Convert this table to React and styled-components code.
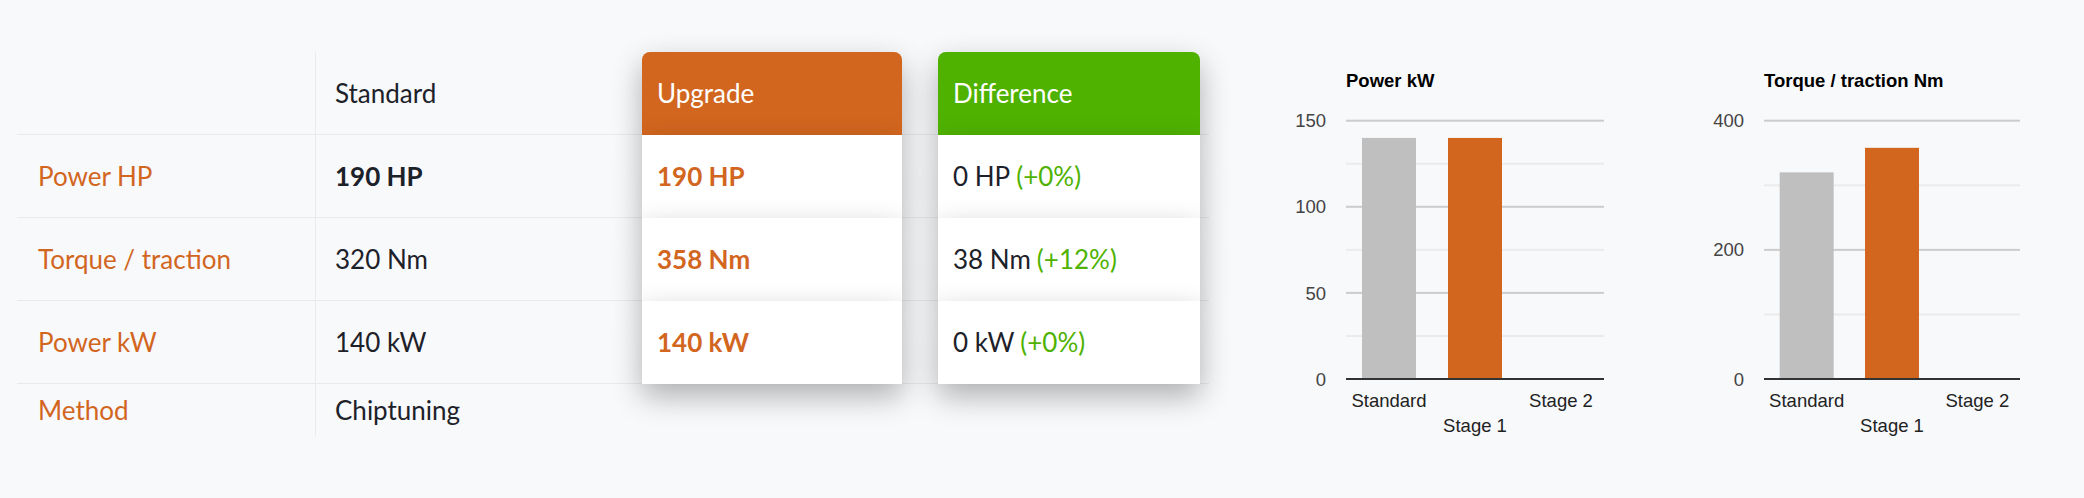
import React from "react";
import styled, { createGlobalStyle } from "styled-components";

const ORANGE = "#D2661F";
const GREEN = "#4FB200";
const LINE = "#E8EAED";
const DARK = "#1D2129";

const GlobalStyle = createGlobalStyle`
  html, body { margin: 0; padding: 0; background: #F8F9FB; }
  body { font-family: Lato, "Open Sans", sans-serif; }
`;

const Page = styled.div`
  display: flex;
  align-items: flex-start;
  padding: 40px 0 0 17px;
  height: 458px;
  overflow: hidden;
`;

const Table = styled.div`
  margin-top: 12px;
  width: 1192px;
  display: flex;
  flex-direction: column;
  font-family: Lato, "Open Sans", sans-serif;
  font-size: 26px;
  color: ${DARK};
`;

const Row = styled.div`
  display: flex;
  align-items: stretch;
  box-sizing: border-box;
  height: ${(p) => (p.$last ? "52px" : "83px")};
  border-bottom: ${(p) => (p.$last ? "none" : `1px solid ${LINE}`)};
`;

const LabelCell = styled.div`
  width: 298px;
  box-sizing: border-box;
  padding-left: 21px;
  display: flex;
  align-items: center;
  color: ${ORANGE};
`;

const StdCell = styled.div`
  width: 327px;
  box-sizing: border-box;
  padding-left: 19px;
  display: flex;
  align-items: center;
  border-left: 1px solid ${LINE};
  font-weight: ${(p) => (p.$bold ? 700 : 400)};
`;

const CardCell = styled.div`
  width: ${(p) => p.$w}px;
  box-sizing: border-box;
  padding: 0 0 1px 15px;
  margin-bottom: -1px;
  display: flex;
  align-items: center;
  background: ${(p) => p.$bg || "#fff"};
  color: ${(p) => p.$color || DARK};
  font-weight: ${(p) => (p.$bold ? 700 : 400)};
  border-radius: ${(p) => (p.$head ? "8px 8px 0 0" : "0")};
  box-shadow: 0 12px 30px rgba(0, 0, 0, 0.3);
`;

const EmptyCard = styled.div`
  width: ${(p) => p.$w}px;
`;

const Gap = styled.div`
  width: 36px;
`;

const Pct = styled.span`
  color: ${GREEN};
  margin-left: 6px;
`;

const Charts = styled.div`
  display: flex;
  margin-left: 51px;
`;

const ChartSvg = styled.svg`
  display: block;
  flex: none;
  font-family: "Liberation Sans", Arial, sans-serif;
`;

const rows = [
  { label: "Power HP", std: "190 HP", stdBold: true, up: "190 HP", diff: "0 HP", pct: "(+0%)" },
  { label: "Torque / traction", std: "320 Nm", up: "358 Nm", diff: "38 Nm", pct: "(+12%)" },
  { label: "Power kW", std: "140 kW", up: "140 kW", diff: "0 kW", pct: "(+0%)" },
];

function BarChart({ title, max, step, majorEvery, values, width, plotW }) {
  const top = 80.7;
  const bottom = 339;
  const left = 86;
  const scale = (bottom - top) / max;
  const catW = plotW / 3;
  const barW = 54;
  const ticks = [];
  for (let v = step; v <= max; v += step) ticks.push(v);
  const labels = [
    { text: "Standard", y: 367 },
    { text: "Stage 1", y: 392 },
    { text: "Stage 2", y: 367 },
  ];
  const colors = ["#BFBFBF", ORANGE];
  return (
    <ChartSvg width={width} height={420} viewBox={`0 0 ${width} 420`}>
      <text x={left} y={47} fontSize="18.5" fontWeight="bold" fill="#000">
        {title}
      </text>
      {ticks.map((v) => {
        const y = bottom - v * scale;
        const major = v % majorEvery === 0;
        return (
          <rect
            key={v}
            x={left}
            y={y - 1}
            width={plotW}
            height={2}
            fill={major ? "#CCCCCC" : "#EBEBEB"}
          />
        );
      })}
      {[0, ...ticks]
        .filter((v) => v % majorEvery === 0)
        .map((v) => (
          <text
            key={"l" + v}
            x={left - 20}
            y={bottom - v * scale + 6.6}
            fontSize="18.5"
            fill="#444"
            textAnchor="end"
          >
            {v}
          </text>
        ))}
      {values.map((v, i) => {
        const h = v * scale;
        const cx = left + catW * (i + 0.5);
        return (
          <rect key={"b" + i} x={cx - barW / 2} y={bottom - h} width={barW} height={h} fill={colors[i]} />
        );
      })}
      <rect x={left} y={bottom - 1} width={plotW} height={2} fill="#333" />
      {labels.map((l, i) => (
        <text
          key={l.text}
          x={left + catW * (i + 0.5)}
          y={l.y}
          fontSize="18.5"
          fill="#222"
          textAnchor="middle"
        >
          {l.text}
        </text>
      ))}
    </ChartSvg>
  );
}

export default function App() {
  return (
    <>
      <GlobalStyle />
      <Page>
        <Table>
          <Row>
            <LabelCell />
            <StdCell>Standard</StdCell>
            <CardCell $w={260} $head $bg={ORANGE} $color="#fff">
              Upgrade
            </CardCell>
            <Gap />
            <CardCell $w={262} $head $bg={GREEN} $color="#fff">
              Difference
            </CardCell>
          </Row>
          {rows.map((r) => (
            <Row key={r.label}>
              <LabelCell>{r.label}</LabelCell>
              <StdCell $bold={r.stdBold}>{r.std}</StdCell>
              <CardCell $w={260} $color={ORANGE} $bold>
                {r.up}
              </CardCell>
              <Gap />
              <CardCell $w={262}>
                {r.diff}
                <Pct>{r.pct}</Pct>
              </CardCell>
            </Row>
          ))}
          <Row $last>
            <LabelCell>Method</LabelCell>
            <StdCell>Chiptuning</StdCell>
            <EmptyCard $w={260} />
            <Gap />
            <EmptyCard $w={262} />
          </Row>
        </Table>
        <Charts>
          <BarChart title="Power kW" max={150} step={25} majorEvery={50} values={[140, 140]} width={418} plotW={258} />
          <BarChart
            title="Torque / traction Nm"
            max={400}
            step={100}
            majorEvery={200}
            values={[320, 358]}
            width={406}
            plotW={256}
          />
        </Charts>
      </Page>
    </>
  );
}
